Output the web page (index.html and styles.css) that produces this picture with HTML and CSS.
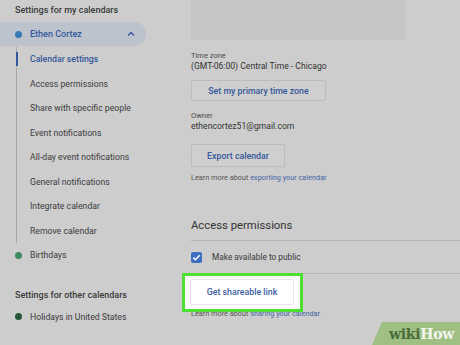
FILE: index.html
```html
<!DOCTYPE html>
<html lang="en">
<head>
    <meta charset="UTF-8">
    <meta name="viewport" content="width=device-width, initial-scale=1.0">
    <title>Calendar settings</title>
    <link rel="stylesheet" href="styles.css">
</head>
<body>
    <div class="page">
        <aside class="sidebar">
            <div class="side-title">Settings for my calendars</div>
            <div class="cal-pill">
                <span class="dot dot-blue"></span>
                <span class="cal-name">Ethen Cortez</span>
                <svg class="chevron" width="10" height="10" viewBox="0 0 10 10">
                    <path d="M2 6.5 L5 3.5 L8 6.5" fill="none" stroke="#34589a" stroke-width="1.4"/>
                </svg>
            </div>
            <ul class="sub-nav">
                <li class="active">Calendar settings</li>
                <li>Access permissions</li>
                <li>Share with specific people</li>
                <li>Event notifications</li>
                <li>All-day event notifications</li>
                <li>General notifications</li>
                <li>Integrate calendar</li>
                <li>Remove calendar</li>
            </ul>
            <div class="cal-row"><span class="dot dot-green"></span>Birthdays</div>
            <div class="side-title other">Settings for other calendars</div>
            <div class="cal-row"><span class="dot dot-dark"></span>Holidays in United States</div>
        </aside>

        <main class="content">
            <div class="desc-box"></div>

            <div class="field-label">Time zone</div>
            <div class="field-value">(GMT-06:00) Central Time - Chicago</div>
            <button class="btn btn-tz">Set my primary time zone</button>

            <div class="field-label owner">Owner</div>
            <div class="field-value">ethencortez51@gmail.com</div>
            <button class="btn btn-export">Export calendar</button>
            <div class="learn">Learn more about <span class="link">exporting your calendar</span></div>

            <h2 class="section-title">Access permissions</h2>
            <div class="check-row">
                <span class="checkbox">
                    <svg width="11" height="11" viewBox="0 0 11 11">
                        <path d="M2.3 5.6 L4.4 7.7 L8.7 3.2" fill="none" stroke="#fff" stroke-width="1.5"/>
                    </svg>
                </span>
                <span>Make available to public</span>
            </div>
            <div class="share-spot">
                <button class="btn btn-share">Get shareable link</button>
            </div>
            <div class="learn under">Learn more about <span class="link">sharing your calendar</span></div>
        </main>
    </div>

    <div class="wikihow"><span class="wiki">wiki</span><span class="how">How</span></div>
</body>
</html>
```

FILE: styles.css
```css
body {
    margin: 0;
    background-color: #cdcdcd;
    font-family: Roboto, "Liberation Sans", sans-serif;
    color: #3c3c3c;
    width: 460px;
    height: 345px;
    overflow: hidden;
    position: relative;
}
.page {
    display: flex;
}
.sidebar {
    width: 191px;
    flex-shrink: 0;
}
.side-title {
    height: 20px;
    line-height: 20px;
    padding-left: 15px;
    font-size: 9px;
    font-weight: 500;
    color: #3a3a3a;
}
.side-title.other {
    margin-top: 17px;
}
.cal-pill {
    margin-top: 2px;
    width: 146px;
    height: 24px;
    box-sizing: border-box;
    padding: 0 10px 0 14.5px;
    background-color: #bdc3cd;
    border-radius: 0 12px 12px 0;
    display: flex;
    align-items: center;
}
.cal-name {
    flex: 1;
    font-size: 9px;
    font-weight: 500;
    color: #34589a;
}
.dot {
    width: 7px;
    height: 7px;
    border-radius: 50%;
    margin-right: 8.5px;
    flex-shrink: 0;
}
.dot-blue {
    background-color: #3a79b4;
}
.dot-green {
    background-color: #3d8a5f;
}
.dot-dark {
    background-color: #22573a;
}
.sub-nav {
    list-style: none;
    margin: 1px 0 0 16px;
    padding: 0;
    border-left: 1px solid #a8a8a8;
}
.sub-nav li {
    position: relative;
    height: 24.5px;
    line-height: 24.5px;
    padding-left: 13px;
    font-size: 8.7px;
    color: #3c3c3c;
}
.sub-nav li.active {
    color: #34589a;
    font-weight: 500;
}
.sub-nav li.active::before {
    content: "";
    position: absolute;
    left: -1.5px;
    top: 5px;
    width: 2px;
    height: 14px;
    background-color: #34589a;
}
.cal-row {
    height: 24.5px;
    padding-left: 14.5px;
    display: flex;
    align-items: center;
    font-size: 8.7px;
    color: #3c3c3c;
}
.content {
    flex: 1;
}
.desc-box {
    width: 215px;
    height: 40px;
    background-color: #c4c5c7;
}
.field-label {
    margin-top: 11px;
    line-height: 10px;
    font-size: 7.5px;
    color: #4a4a4a;
}
.field-label.owner {
    margin-top: 10px;
}
.field-value {
    line-height: 11px;
    font-size: 8.6px;
    color: #333;
}
.btn {
    display: block;
    font-family: Roboto, "Liberation Sans", sans-serif;
    font-size: 8.8px;
    font-weight: 500;
    color: #34589a;
    background-color: #cfcfcf;
    border: 1px solid #bcbcbc;
    border-radius: 2px;
    padding: 0;
}
.btn-tz {
    margin-top: 8px;
    width: 135px;
    height: 21px;
}
.btn-export {
    margin-top: 12px;
    width: 94px;
    height: 23px;
}
.learn {
    margin-top: 6px;
    line-height: 10px;
    font-size: 7.3px;
    color: #555;
}
.link {
    color: #4566a4;
}
.section-title {
    margin: 35px 0 0;
    line-height: 16px;
    font-size: 11.3px;
    font-weight: 400;
    color: #333;
    padding-bottom: 6px;
    border-bottom: 1px solid #b6b6b6;
}
.check-row {
    height: 32px;
    display: flex;
    align-items: center;
    border-bottom: 1px solid #b6b6b6;
    font-size: 8.3px;
    color: #3a3a3a;
}
.checkbox {
    width: 11px;
    height: 11px;
    border-radius: 2px;
    background-color: #3f6fc2;
    margin-right: 10px;
    display: flex;
}
.share-spot {
    position: relative;
    z-index: 1;
    margin: -1px 0 0 -9px;
    width: 104px;
    padding: 3px 6px 4px 5px;
    background-color: #fdfdfd;
    border: 3.5px solid #4ee030;
}
.btn-share {
    width: 104px;
    height: 26px;
    background-color: #ffffff;
    border-color: #e6e6e6;
    color: #3d5fa0;
}
.learn.under {
    margin-top: -3px;
}
.wikihow {
    position: absolute;
    right: 0;
    bottom: 0;
    width: 88px;
    height: 23px;
    box-sizing: border-box;
    padding: 2px 6px 0 0;
    background-color: #9fbf83;
    clip-path: polygon(10px 0, 100% 0, 100% 100%, 0 100%);
    text-align: right;
    font-family: "DejaVu Serif", "Liberation Serif", serif;
    font-weight: bold;
    font-size: 14px;
    line-height: 20px;
    letter-spacing: -0.3px;
}
.wiki {
    color: #4c6c3c;
}
.how {
    color: #f2f6ee;
}
```
